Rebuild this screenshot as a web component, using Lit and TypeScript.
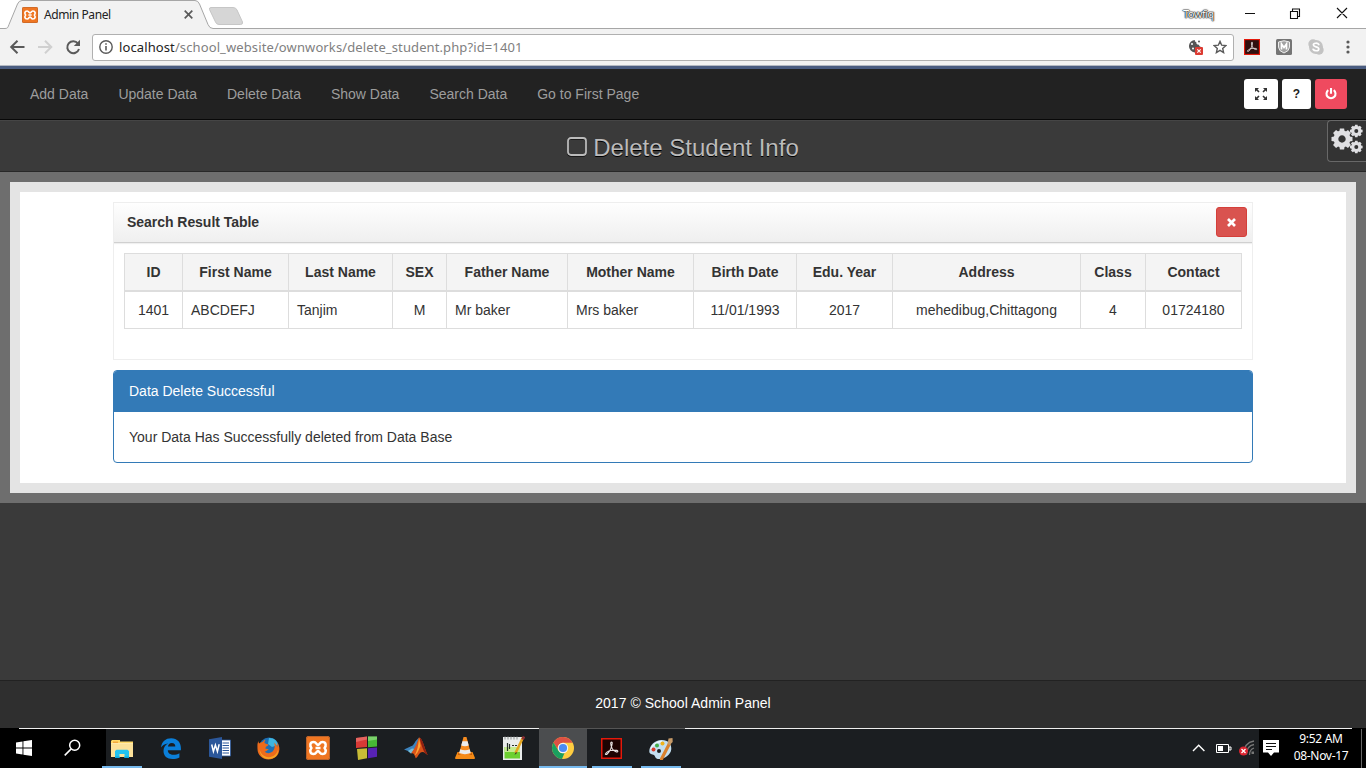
import { LitElement, html, css, svg } from "lit";
import { customElement } from "lit/decorators.js";

const xampp = (size: number) => html`<svg width=${size} height=${size} viewBox="0 0 24 24">
  <rect width="24" height="24" rx="2.5" fill="#ef7622" />
  <rect x=".5" y=".5" width="23" height="23" rx="2" fill="none" stroke="#b9622b" />
  <path d="M12 9C10.500 9 10.300 6 7.700 6 3.600 6 3.700 10 5.500 12c-1.800 2-1.900 6 2.200 6 2.600 0 2.800-3 4.300-3s1.700 3 4.300 3c4.100 0 4-4 2.200-6 1.800-2 1.900-6-2.200-6C13.700 6 13.500 9 12 9zM9.500 12h5" fill="none" stroke="#fff" stroke-width="2.500" stroke-linejoin="round" />
</svg>`;

const acrobat = (size: number, bg: string) => html`<svg width=${size} height=${size} viewBox="0 0 21 21">
  <rect x=".75" y=".75" width="19.500" height="19.500" fill=${bg} stroke="#e3190b" stroke-width="1.500" />
  <path d="M4.500 15.700c1.500-2.700 5.700-4 11.300-3.300 1.600.3 1.300 2-.5 1.500-3-.7-5.500-4.200-5.600-8.600 0-1.600 1.700-1.600 1.500 0-.4 4.500-2.600 8.300-5 10.700-.9.700-2.200.4-1.700-.3z" fill="none" stroke="#e8e4e4" stroke-width="1.100" />
</svg>`;

const windowsLogo = html`<svg width="16" height="16" viewBox="0 0 16 16" fill="#fff">
  <path d="M0 2.400 6.500 1.400V7.500H0zM7.400 1.200 16 0V7.500H7.400zM0 8.400h6.500v6.200L0 13.600zM7.400 8.400H16V16l-8.600-1.200z" /></svg>`;

const searchIcon = html`<svg width="18" height="18" viewBox="0 0 18 18" fill="none" stroke="#fff" stroke-width="1.500">
  <circle cx="10.700" cy="6.300" r="5" /><path d="M7.200 9.900 .7 16.400" /></svg>`;

const folder = html`<svg width="22" height="19" viewBox="0 0 22 19">
  <path d="M0 1.500h1V1h8v1.500h13V18H0z" fill="#ffd968" /><path d="M0 4h22v14H0z" fill="#fce29a" />
  <path d="M2 2.500h5V4H2z" fill="#f2a83d" /><path d="M0 4h22v1H0z" fill="#ffe9ab" />
  <path d="M4 19v-7l1.500-1.200h11L18 12v7h-4.500v-4h-5v4z" fill="#22c3f0" /><path d="M4 17.500h4.500V19H4zM13.500 17.500H18V19h-4.500z" fill="#0fa9dc" /></svg>`;

const edge = html`<svg width="20" height="21" viewBox="0 0 20 21">
  <path d="M0 9.400C.7 3.600 4.500.2 10.200.2 16.300.2 19.900 4.600 19.900 10v2.300H6.800c.1 3 2.500 4.500 5.600 4.500 2.300 0 4.300-.6 6-1.600v4.300c-2 1-4.400 1.500-7 1.500-5.400 0-8.900-3-8.900-8 0-3.500 1.700-6 4.600-7.500C3.700 5.700 1.600 7.400 0 9.400zM6.900 8.600h7.400c0-2.200-1-3.600-3.500-3.600-2.200 0-3.600 1.500-3.900 3.600z" fill="#0b7fd9" /></svg>`;

const word = html`<svg width="22" height="22" viewBox="0 0 22 22">
  <path d="M12 3h9.500v16H12z" fill="#fff" stroke="#2b579a" stroke-width=".8" />
  <path d="M13.500 6H20M13.500 8.500H20M13.500 11H20M13.500 13.500H20M13.500 16H20" stroke="#2b579a" />
  <path d="M0 2.300 13 0v22L0 19.700z" fill="#2b579a" />
  <path d="m2.700 7.500 1.700 7 2-6.500 2 6.500 1.800-7.300" fill="none" stroke="#fff" stroke-width="1.500" /></svg>`;

const firefox = html`<svg width="23" height="23" viewBox="0 0 23 23">
  <circle cx="12" cy="10.500" r="10" fill="#1c6fb5" /><path d="M12 1c5-.4 8.500 3 9 7l-6 2-4-3z" fill="#3fb5e0" />
  <path d="M1.500 4c0 1 .2 1.900.6 2.500 1-1 2.100-1.500 3.400-1.600C6.300 3.700 7.500 3 8.600 2.700 7.700 3.900 7.400 5 7.500 6c1.100 1 2.800 1.100 4 1.500-.3 1.500-2 1.900-2.800 2.600.1.800 0 1.300-.3 1.800 1.200-.4 2.500.2 3.500.7-1.700.2-2.200 2-4.200 1.900 1.400 2 5 2.200 7.200.6 3-2.100 3.500-6 2-9.500 2.200 1.500 3.200 3.500 3.400 5 .3-1.500.1-3.300-.5-5 2 2 2.700 4.300 2.600 6.600-.3 6-5 10.300-10.900 10.300S.5 18 .5 12C.5 9 0 6.500 1.500 4z" fill="#ed6b1b" />
  <path d="M2.500 12c1 5 4.500 8 9 8.200 5 .1 8.500-3 9.400-7.400.9 5.500-3.500 9.200-9.300 9.200-5.200 0-9-4-9.100-10z" fill="#f5a623" /></svg>`;

const blocks = html`<svg width="23" height="24" viewBox="0 0 23 24">
  <path d="M1 2 12 .5v10.600L1 12z" fill="#d83a35" /><path d="M13 .5h9v10l-9 .8z" fill="#47b735" />
  <path d="m2 13 10-.7v10L3 24z" fill="#c8bc36" /><path d="m13 12.200 9-.7v9.300l-9 1.400z" fill="#5722b4" />
  <path d="m1 2 11-1.500v3L1 6z" fill="#ef817c" opacity=".6" /><path d="M13 .5h9v3l-9 1.500z" fill="#9de38f" opacity=".6" /></svg>`;

const matlab = html`<svg width="24" height="22" viewBox="0 0 24 22">
  <path d="m0 12.500 7-3.200c2-.4 3.200-2.500 4.500-5L15 .5 12 11l-5 5.500-3-2.600z" fill="#3d83bd" /><path d="m4 14 4-2.500 3 .5-4 4.500z" fill="#78c1d8" />
  <path d="M15 .5C13 6 11.500 10.500 7 16.500c2-.9 3.500 0 4.700 4.800C14 20.500 15 15 18.500 15c2.200 0 3.500 2 5.200 3C20.500 12 18.500.5 15 .5z" fill="#d95319" />
  <path d="M15 .5c-.5 8-2 14-4.500 18 3-1.500 4.500-6.500 6-9.500z" fill="#ffa734" /><path d="M15.500.6c3.500 1.500 5 11.500 8.200 17.400-3.500-1-6-8-8.200-17.400z" fill="#8e1f12" /></svg>`;

const vlc = html`<svg width="20" height="22" viewBox="0 0 20 22">
  <path d="M2.500 15h15l2.500 6q0 1-1 1H1q-1 0-1-1z" fill="#f58b16" /><path d="M3.500 15.500h13l.6 2.500H3z" fill="#c65d08" />
  <path d="M8.500 0h3L16 17q-6 3-12 0z" fill="#f68b1f" /><path d="m7.400 4.200 5.200 0 1.100 4.300q-3.700 1.500-7.500 0zM5.200 12.300q4.800 1.700 9.500 0l1 3.700q-5.700 2.300-11.500 0z" fill="#ececec" /></svg>`;

const notepad = html`<svg width="22" height="24" viewBox="0 0 22 24">
  <rect y="1" width="19" height="23" fill="#e9ecec" /><path d="M1.500 11H17v11.500H1.500z" fill="#6cd030" /><path d="M1.500 11H17v5H1.500z" fill="#c5ec8e" />
  <path d="M2 .5v3M5 .5v3M8 .5v3M11 .5v3M14 .5v3" stroke="#8a8f90" /><path d="M4.500 7v8M6.500 8v5M9 9.500h2M12 9.500h2" fill="none" stroke="#273129" stroke-width="1.200" />
  <path d="M20 1.500 12.500 17" stroke="#e4a51f" stroke-width="2.600" /><path d="m21 .5-1.500 3" stroke="#8c2f33" stroke-width="2.700" /><path d="m13 16-1.500 3 2.500-2z" fill="#222" /></svg>`;

const chrome = html`<svg width="22" height="22" viewBox="0 0 22 22">
  <circle cx="11" cy="11" r="11" fill="#ffcd40" />
  <path d="M1.500 5.500A11 11 0 0 1 20.600 5.700H11A5.300 5.300 0 0 0 6.400 13.700z" fill="#dd5144" />
  <path d="M1.500 5.500 6.400 13.700A5.300 5.300 0 0 0 12.500 16L10 22A11 11 0 0 1 1.500 5.500z" fill="#1aa05f" />
  <circle cx="11" cy="11" r="5.200" fill="#f4f4f4" /><circle cx="11" cy="11" r="4.100" fill="#4c8bf5" /></svg>`;

const paint = html`<svg width="24" height="23" viewBox="0 0 24 23">
  <path d="M13 3C7 2.500.5 8 .3 14c-.1 3.500 3 3 4.700 4 1.300 1 1 3.500 4 4 5 .7 13-3.500 13.300-10C22.500 6.500 19 3.400 13 3zM10 12a2 2 0 1 1 0 4 2 2 0 0 1 0-4z" fill="#c3dff0" />
  <path d="M13 4.500C8 4.500 3 8 2 12" fill="none" stroke="#eef8fd" stroke-width="1.300" />
  <circle cx="4.500" cy="12.500" r="2" fill="#d93c2a" /><circle cx="8" cy="8.500" r="2" fill="#43ae4b" /><circle cx="13.500" cy="6.500" r="2" fill="#efb21a" />
  <path d="M12.500 22 20 7.500" stroke="#d9812d" stroke-width="3.200" stroke-linecap="round" /><path d="m18.500 7 1-5.500L23.500 1l.2 4-3 3z" fill="#c69a68" /></svg>`;

const gearPath = (cx: number, cy: number, r: number, hole: number) => svg`<g transform="translate(${cx} ${cy})">
  ${[0, 45, 90, 135, 180, 225, 270, 315].map(a => svg`<path transform="rotate(${a})" d="M${-r * 0.2} ${-r}H${r * 0.2}L${r * 0.27} ${-r * 0.6}H${-r * 0.27}z" />`)}
  <circle r=${(r * 0.8 + hole) / 2} fill="none" stroke="#dfdfe2" stroke-width=${r * 0.8 - hole} /></g>`;

const tasks = [
  { icon: folder, state: "open" }, { icon: edge, state: "" }, { icon: word, state: "" }, { icon: firefox, state: "" },
  { icon: xampp(24), state: "" }, { icon: blocks, state: "" }, { icon: matlab, state: "" }, { icon: vlc, state: "" },
  { icon: notepad, state: "" }, { icon: chrome, state: "active" }, { icon: acrobat(21, "#1d0302"), state: "open" }, { icon: paint, state: "open" },
];

@customElement("browser-chrome")
class BrowserChrome extends LitElement {
  static styles = css`
    :host { display: block; height: 69px; box-sizing: border-box; background: #f2f2f2; border-bottom: 3px solid #4a5c80; font: 12px/16px "Noto Sans", sans-serif; }
    svg { display: block; flex: none; }
    .tabs { height: 29px; display: grid; grid-template-columns: 1366px; background: #fff; }
    .tabs > * { grid-area: 1 / 1; }
    .row { display: flex; align-items: center; position: relative; }
    .tabicon { margin-left: 22px; }
    .title { margin-left: 6px; width: 67px; white-space: nowrap; letter-spacing: -.4px; color: #222; }
    .close { margin-left: 73px; }
    .user { margin-left: 990px; width: 34px; font-size: 11px; letter-spacing: -.5px; color: #fff; text-shadow: 0 0 1px #000, 0 0 1px #000, 0 0 2px #333, 0 0 1px #333; margin-top: -2px; }
    .win { margin-left: 28px; margin-top: -3px; }
    .bar { height: 36px; display: flex; align-items: center; border-bottom: 1px solid #b4b9c2; }
    .nav { margin-left: 9px; }
    .url { margin-left: 10px; width: 1142px; height: 27px; box-sizing: border-box; border: 1px solid #b0b0b0; border-radius: 3px; background: #fff; display: flex; align-items: center; padding: 0 6px 0 6px; font-size: 13px; }
    .addr { margin-left: 6px; flex: 1; color: #808080; letter-spacing: .11px; white-space: nowrap; }
    .host { color: #222; }
    .star { margin-left: 9px; }
    .ext { margin-left: 10px; }
    .ext2 { margin-left: 16px; }
    .dots { margin-left: 22px; }
  `;
  render() {
    return html`
      <div class="tabs">
        <svg width="1366" height="29" viewBox="0 0 1366 29">
          <path d="M0 28.500H5C8 28.500 8 27 9 24.500L17.500 4Q19 .5 22 .5H195Q198 .5 199.500 4L208 24.500Q209.500 28.500 213 28.500H1366V30H0z" fill="#f2f2f2" stroke="#a6a6a6" />
          <path d="M211 7.500H233Q236 7.500 237 10L242.500 22Q243 24.500 240.500 24.500H219Q216.500 24.500 215.500 22L209.500 9.500Q209 7.500 211 7.500z" fill="#d6d6d6" stroke="#c6c6c6" />
        </svg>
        <div class="row">
          <div class="tabicon">${xampp(16)}</div><span class="title">Admin Panel</span>
          <svg class="close" width="9" height="9" viewBox="0 0 9 9" stroke="#5a5a5a" stroke-width="1.700"><path d="m.7.7 7.600 7.600m0-7.600L.7 8.300" /></svg>
          <span class="user">Towfiq</span>
          <svg class="win" width="103" height="12" viewBox="0 0 103 12" fill="none" stroke="#111" stroke-width="1.100">
            <path d="M0 6.500h10M45.500 4.500h7v7h-7zM47.500 4V2h7v7.500H53M92 1l10 10m0-10L92 11" />
          </svg>
        </div>
      </div>
      <div class="bar">
        <svg class="nav" width="73" height="18" viewBox="0 0 73 18" fill="none" stroke-width="2">
          <path d="M15.500 9H2.500M8.500 2.700 2.200 9l6.300 6.300" stroke="#5a5a5a" />
          <path d="M29 9h13M36 2.700 42.300 9 36 15.300" stroke="#d0d0d0" />
          <path d="M69 5.500A6 6 0 1 0 70 11" stroke="#5a5a5a" /><path d="M71 1.800V8h-6.200z" fill="#5a5a5a" />
        </svg>
        <div class="url">
          <svg width="14" height="14" viewBox="0 0 14 14" fill="none" stroke="#5a5a5a" stroke-width="1.400"><circle cx="7" cy="7" r="6.200" /><path d="M7 6v4.500M7 3.300v1.500" stroke-width="1.600" /></svg>
          <span class="addr"><span class="host">localhost</span>/school_website/ownworks/delete_student.php?id=1401</span>
          <svg width="16" height="16" viewBox="0 0 16 16"><path d="M7 1a6.200 6.200 0 1 0 6.300 7C12 8 11 7 11 5.800 9 6 8 4.500 8.300 3 7 3 6.500 2 7 1z" fill="#555" /><circle cx="4" cy="5" r="1" fill="#fff" /><circle cx="5" cy="9.500" r="1" fill="#fff" /><circle cx="11" cy="2.500" r="1" fill="#555" /><rect x="7" y="8" width="8" height="8" rx="1" fill="#dc3b32" /><path d="m9.300 10.300 3.400 3.400m0-3.400-3.400 3.400" stroke="#fff" stroke-width="1.100" /></svg>
          <svg class="star" width="14" height="14" viewBox="0 0 14 14" fill="none" stroke="#5a5a5a" stroke-width="1.400"><path d="m7 1.400 1.700 3.800 4.100.4-3.100 2.800.9 4.200L7 10.400l-3.600 2.200.9-4.200L1.200 5.600l4.100-.4z" /></svg>
        </div>
        <div class="ext">${acrobat(16, "#30100f")}</div>
        <svg class="ext2" width="16" height="16" viewBox="0 0 16 16"><rect width="16" height="16" rx="1.500" fill="#757575" /><path d="M2.500 3Q8 .5 13.500 3v5q0 4-5.500 6Q2.500 12 2.500 8z" fill="#a2a2a2" stroke="#eee" /><path d="M5.500 10.500V5L8 8.500 10.500 5v5.500" fill="none" stroke="#fff" stroke-width="1.700" /></svg>
        <svg class="ext2" width="16" height="16" viewBox="0 0 16 16"><circle cx="5" cy="5" r="4.700" fill="#c3c3c3" /><circle cx="11" cy="11" r="4.700" fill="#c3c3c3" /><circle cx="8" cy="8" r="7" fill="#c3c3c3" /><path d="M10.800 5.500C9.500 3.500 5.300 4 5.400 6c.1 2.300 5.400 1.400 5.400 3.900 0 2.300-4.400 2.500-5.700.4" fill="none" stroke="#fff" stroke-width="1.700" stroke-linecap="round" /></svg>
        <svg class="dots" width="4" height="14" viewBox="0 0 4 14" fill="#5a5a5a"><circle cx="2" cy="2" r="1.600" /><circle cx="2" cy="7" r="1.600" /><circle cx="2" cy="12" r="1.600" /></svg>
      </div>`;
  }
}

@customElement("admin-page")
class AdminPage extends LitElement {
  static styles = css`
    :host { display: flex; flex-direction: column; height: 659px; background: #3a3a3a; color: #333; font: 14px/20px "Liberation Sans", Arial, sans-serif; }
    svg { display: block; }
    .nav { height: 51px; box-sizing: border-box; background: #222; border-bottom: 1px solid #080808; display: flex; align-items: center; padding: 0 19px 0 30px; color: #9d9d9d; }
    .links { display: flex; gap: 30px; flex: 1; white-space: nowrap; }
    .btns { display: flex; gap: 4px; }
    .btn { height: 30px; border-radius: 3px; background: #fff; display: flex; align-items: center; justify-content: center; font-weight: bold; font-size: 12px; color: #222; }
    .full { width: 34px; } .help { width: 29px; } .power { width: 32px; background: #ef4a5f; }
    .head { height: 52px; box-sizing: border-box; border-top: 1px solid #454545; border-bottom: 1px solid #282828; display: grid; grid-template-columns: 39px 1fr 39px; }
    .h { grid-column: 2; display: flex; justify-content: center; align-items: center; gap: 6px; font-size: 24px; line-height: 26px; color: #bbb; text-shadow: 0 1px 0 #000; padding-top: 4px; }
    .h svg { margin-top: -2px; }
    .gears { width: 39px; height: 42px; margin-top: -1px; box-sizing: border-box; border: 1px solid #686868; border-right: 0; border-radius: 4px 0 0 4px; background: #333; padding: 3px 0 0 3px; overflow: hidden; }
    .outer { background: #6e6e6e; padding: 10px; }
    .frame { border: 10px solid #e4e4e4; background: #fff; height: 281px; padding: 10px 93px 0; }
    .panel { height: 158px; box-sizing: border-box; border: 1px solid #eee; }
    .ptitle { height: 40px; box-sizing: border-box; display: flex; justify-content: space-between; align-items: flex-start; padding: 4px 5px 0 13px; background: linear-gradient(#fefefe, #efefef); border-bottom: 1px solid #d0d0d0; box-shadow: 0 1px 1px #f0f0f0; font-weight: bold; line-height: 30px; letter-spacing: -.04px; }
    .x { width: 31px; height: 30px; box-sizing: border-box; border: 1px solid #d43f3a; border-radius: 3px; background: #d9534f; display: flex; align-items: center; justify-content: center; }
    table { width: 1118px; margin: 10px 0 0 10px; border-collapse: collapse; table-layout: fixed; }
    th, td { border: 1px solid #ddd; padding: 8px 0; height: 20px; text-align: center; white-space: nowrap; }
    th { background: #f4f4f4; border-bottom-width: 2px; padding: 8px 0; }
    td.left { text-align: left; padding-left: 8px; }
    .ok { margin-top: 10px; height: 93px; box-sizing: border-box; border: 1px solid #337ab7; border-radius: 4px; overflow: hidden; }
    .okt { background: #337ab7; color: #fff; padding: 10px 15px 11px; }
    .okb { padding: 15px; }
    .foot { margin-top: auto; height: 48px; box-sizing: border-box; background: #2f2f2f; border-top: 1px solid #222; color: #fff; display: flex; justify-content: center; align-items: center; padding-bottom: 3px; letter-spacing: .04px; }
  `;
  render() {
    const cols: [string, string, number, boolean][] = [
      ["ID", "1401", 58, false], ["First Name", "ABCDEFJ", 106, true], ["Last Name", "Tanjim", 104, true], ["SEX", "M", 54, false],
      ["Father Name", "Mr baker", 121, true], ["Mother Name", "Mrs baker", 126, true], ["Birth Date", "11/01/1993", 103, false],
      ["Edu. Year", "2017", 96, false], ["Address", "mehedibug,Chittagong", 188, false], ["Class", "4", 65, false], ["Contact", "01724180", 96, false]];
    return html`
      <nav class="nav">
        <div class="links">${["Add Data", "Update Data", "Delete Data", "Show Data", "Search Data", "Go to First Page"].map(t => html`<span>${t}</span>`)}</div>
        <div class="btns">
          <div class="btn full"><svg width="14" height="14" viewBox="0 0 14 14" fill="#333" stroke="#333" stroke-width="1.600"><path stroke="none" d="M1 1h4L1 5zM13 1v4L9 1zM1 13V9l4 4zM13 13H9l4-4z" /><path d="m2 2 3 3M12 2 9 5M2 12l3-3M12 12 9 9" /></svg></div>
          <div class="btn help">?</div>
          <div class="btn power"><svg width="12" height="12" viewBox="0 0 12 12" fill="none" stroke="#fff" stroke-width="2.100"><path d="M3.300 2.200a4.500 4.500 0 1 0 5.400 0M6 0v5.800" /></svg></div>
        </div>
      </nav>
      <header class="head">
        <div class="h"><svg width="20" height="20" viewBox="0 0 20 20" fill="none"><rect x="1" y="2" width="18" height="17" rx="3" stroke="#111" stroke-width="1.600" /><rect x="1" y="1" width="18" height="17" rx="3" stroke="#bbb" stroke-width="1.800" /></svg>Delete Student Info</div>
        <div class="gears"><svg width="34" height="34" viewBox="0 0 34 34" fill="#dfdfe2">${gearPath(11, 15, 10.5, 3.7)}${gearPath(25.3, 7, 6.3, 2)}${gearPath(25.3, 23, 6.3, 2)}</svg></div>
      </header>
      <div class="outer"><main class="frame">
        <section class="panel">
          <div class="ptitle"><span>Search Result Table</span><span class="x"><svg width="9" height="9" viewBox="0 0 9 9" stroke="#fff" stroke-width="2.700"><path d="m1 1 7 7m0-7L1 8" /></svg></span></div>
          <table>
            <colgroup>${cols.map(c => html`<col style="width:${c[2]}px">`)}</colgroup>
            <thead><tr>${cols.map(c => html`<th>${c[0]}</th>`)}</tr></thead>
            <tbody><tr>${cols.map(c => html`<td class=${c[3] ? "left" : ""}>${c[1]}</td>`)}</tr></tbody>
          </table>
        </section>
        <section class="ok"><div class="okt">Data Delete Successful</div><div class="okb">Your Data Has Successfully deleted from Data Base</div></section>
      </main></div>
      <footer class="foot">2017 © School Admin Panel</footer>`;
  }
}

@customElement("task-bar")
class TaskBar extends LitElement {
  static styles = css`
    :host { display: flex; flex-direction: column; height: 40px; background: #000; color: #fff; }
    svg { display: block; }
    .edge { height: 1px; width: 1333px; margin-left: 19px; background: linear-gradient(90deg, #eee 520px, #555 520px 666px, #eee 666px); }
    .row { height: 39px; display: flex; align-items: stretch; background: linear-gradient(90deg, #000 106px, #1b1e21 106px 1259px, #000 1259px); }
    .cell { width: 49px; display: flex; align-items: center; justify-content: center; position: relative; padding-bottom: 1px; box-sizing: border-box; }
    .start { width: 48px; }
    .open::after { content: ""; position: absolute; left: 5px; width: 40px; bottom: 0; height: 2px; background: #76b9ed; }
    .active { background: linear-gradient(90deg, transparent 1px, #4b4d4f 1px); }
    .active::after { content: ""; position: absolute; left: 1px; right: 0; bottom: 0; height: 2px; background: #76b9ed; }
    .tray { margin-left: auto; display: flex; align-items: center; }
    .tray > svg { margin-top: -2px; }
    .clock { width: 76px; margin: -4px 1px 0 3px; font: 12px/17px "Noto Sans", sans-serif; letter-spacing: -.3px; text-align: center; }
    .peek { width: 1px; height: 39px; background: #666; margin: 0 4px 0 1px; }
  `;
  render() {
    return html`<div class="edge"></div><div class="row">
      <div class="cell start">${windowsLogo}</div><div class="cell">${searchIcon}</div>
      ${tasks.map(t => html`<div class="cell ${t.state}">${t.icon}</div>`)}
      <div class="tray">
        <svg width="88" height="20" viewBox="0 0 88 20" fill="none" stroke="#fff">
          <path d="m1 13 5.700-5.700L12.400 13" stroke-width="1.400" />
          <path d="M24.500 6.500h12v8h-12zM37 9h2v3h-2z" /><path d="M26 8h5v5h-5z" fill="#fff" stroke="none" />
          <g stroke="#777" stroke-width="1.300"><path d="M52 16C52 8 56 4 62 3M54.500 16.500c0-5 2.500-9 7.500-10M57.500 17c0-3.500 1.500-6 4.500-7" /></g><path d="M59.500 13.500H62V16h-2.500z" fill="#777" stroke="none" />
          <circle cx="51.500" cy="13" r="4.500" fill="#dc2430" stroke="none" /><path d="m49.500 11 4 4m0-4-4 4" stroke-width="1.300" />
          <path d="M71 2h16v12.500h-5L79 18l-3-3.500h-5z" fill="#fff" stroke="none" /><path d="M74 5.500h10M74 8.500h10M74 11.500h6" stroke="#111" />
        </svg>
        <div class="clock">9:52 AM<br>08-Nov-17</div><div class="peek"></div>
      </div></div>`;
  }
}

@customElement("app-root")
class AppRoot extends LitElement {
  static styles = css`:host { display: block; width: 1366px; height: 768px; overflow: hidden; }`;
  render() {
    return html`<browser-chrome></browser-chrome><admin-page></admin-page><task-bar></task-bar>`;
  }
}
